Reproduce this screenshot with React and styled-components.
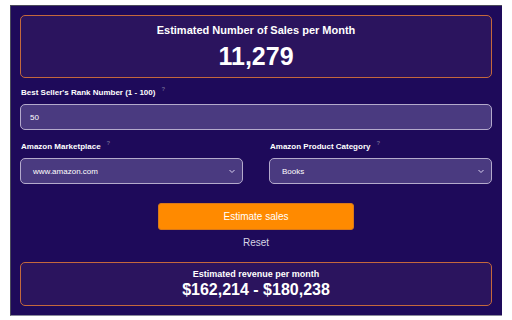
import React from "react";
import styled, { createGlobalStyle } from "styled-components";

const GlobalStyle = createGlobalStyle`
  body {
    margin: 0;
    background: #ffffff;
    font-family: "Liberation Sans", Arial, sans-serif;
  }
`;

const Panel = styled.div`
  box-sizing: border-box;
  margin: 5px 0 0 10px;
  width: 492px;
  height: 311px;
  background: #1e0a5a;
  border-top: 1px solid #4a4a5a;
  border-left: 1px solid #4a4a5a;
  border-bottom: 1px solid #8a8a9a;
  padding: 9px 10px 0 9px;
  color: #ffffff;
  display: flex;
  flex-direction: column;
`;

const ResultCard = styled.div`
  box-sizing: border-box;
  height: ${(p) => p.height}px;
  margin-top: ${(p) => p.top || 0}px;
  background: #2b145e;
  border: 1px solid #c4683c;
  border-radius: 5px;
  display: flex;
  flex-direction: column;
  align-items: center;
  justify-content: center;
  gap: ${(p) => p.gap}px;
`;

const CardTitle = styled.div`
  font-size: ${(p) => p.size}px;
  font-weight: 600;
  line-height: 1;
`;

const CardValue = styled.div`
  font-size: ${(p) => p.size}px;
  font-weight: 700;
  line-height: 1;
`;

const Field = styled.div`
  display: flex;
  flex-direction: column;
  flex: 1;
`;

const Label = styled.div`
  font-size: 8px;
  font-weight: 700;
  line-height: 10px;
  margin-bottom: 6px;
  padding-left: 1px;
`;

const Help = styled.sup`
  font-size: 6px;
  color: #6c6290;
  margin-left: 6px;
  vertical-align: 4px;
`;

const Control = styled.div`
  box-sizing: border-box;
  height: 26px;
  background: #4a3a80;
  border: 1px solid #b4aacc;
  border-radius: 5px;
  display: flex;
  align-items: center;
  justify-content: space-between;
  padding: 0 6px 0 ${(p) => p.padLeft}px;
  font-size: 8px;
  color: #ffffff;
`;

const Row = styled.div`
  display: flex;
  gap: 26px;
  margin-top: ${(p) => p.top}px;
`;

const Actions = styled.div`
  display: flex;
  flex-direction: column;
  align-items: center;
  margin-top: 19px;
`;

const PrimaryButton = styled.button`
  box-sizing: border-box;
  width: 196px;
  height: 27px;
  background: #ff8a00;
  border: 1px solid #d8781a;
  border-radius: 3px;
  color: #ffffff;
  font-family: inherit;
  font-size: 10px;
  font-weight: 500;
`;

const LinkButton = styled.button`
  background: none;
  border: none;
  color: #d8d4e4;
  font-family: inherit;
  font-size: 10px;
  margin-top: 7px;
  padding: 0;
`;

const Chevron = () => (
  <svg width="8" height="8" viewBox="0 0 8 8">
    <path d="M1.5 3l2.5 2.5L6.5 3" fill="none" stroke="#d8d0ee" strokeWidth="1" />
  </svg>
);

export default function App() {
  return (
    <>
      <GlobalStyle />
      <Panel>
        <ResultCard height={63} gap={8}>
          <CardTitle size={11}>Estimated Number of Sales per Month</CardTitle>
          <CardValue size={25}>11,279</CardValue>
        </ResultCard>

        <Row top={6}>
          <Field>
            <Label>
              Best Seller's Rank Number (1 - 100)<Help>?</Help>
            </Label>
            <Control padLeft={9}>50</Control>
          </Field>
        </Row>

        <Row top={8}>
          <Field>
            <Label>
              Amazon Marketplace<Help>?</Help>
            </Label>
            <Control padLeft={12}>
              www.amazon.com
              <Chevron />
            </Control>
          </Field>
          <Field>
            <Label>
              Amazon Product Category<Help>?</Help>
            </Label>
            <Control padLeft={12}>
              Books
              <Chevron />
            </Control>
          </Field>
        </Row>

        <Actions>
          <PrimaryButton>Estimate sales</PrimaryButton>
          <LinkButton>Reset</LinkButton>
        </Actions>

        <ResultCard height={44} gap={3} top={14}>
          <CardTitle size={9}>Estimated revenue per month</CardTitle>
          <CardValue size={16}>$162,214 - $180,238</CardValue>
        </ResultCard>
      </Panel>
    </>
  );
}
